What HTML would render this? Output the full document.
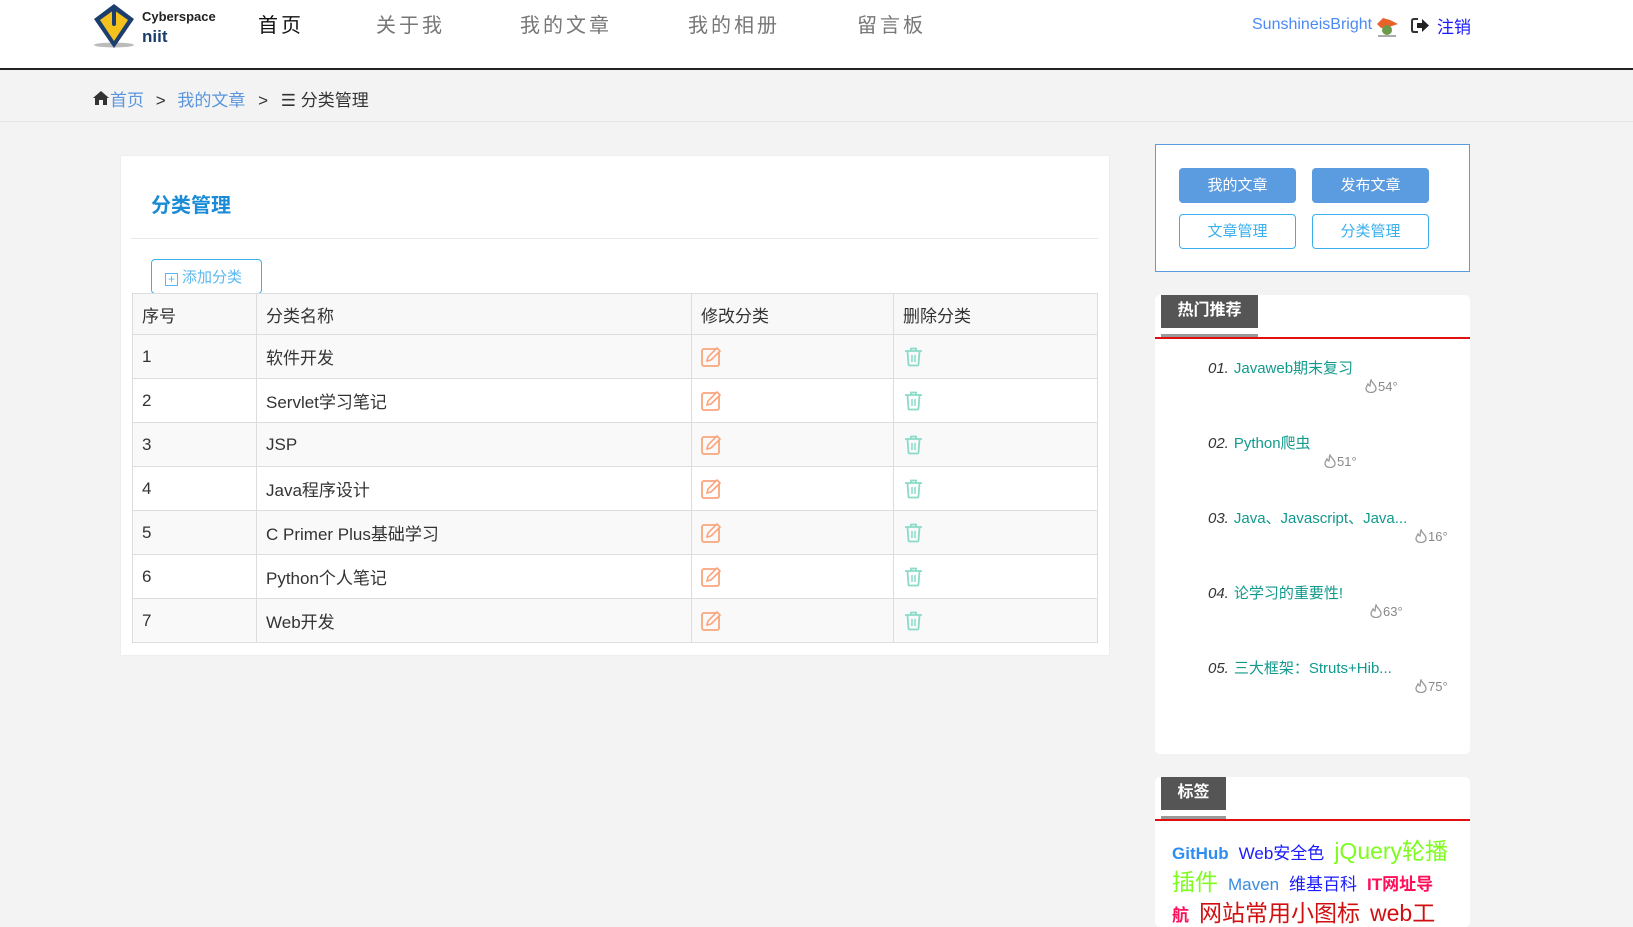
<!DOCTYPE html>
<html><head><meta charset="utf-8"><style>
*{margin:0;padding:0;box-sizing:border-box}
body{width:1633px;height:911px;overflow:hidden;background:#f3f3f3;font-family:"Liberation Sans","Noto Sans CJK SC",sans-serif;position:relative;color:#333}
.abs{position:absolute;white-space:nowrap}
#hdr{position:absolute;left:0;top:0;width:1633px;height:70px;background:#fff;border-bottom:2px solid #222}
.nav{position:absolute;top:9px;font-size:20px;letter-spacing:3px;color:#777}
#bc{position:absolute;left:0;top:70px;width:1633px;height:52px;border-bottom:1px solid #e5e5e5}
#main{position:absolute;left:120px;top:155px;width:990px;height:501px;background:#fff;border:1px solid #eee}
table{position:absolute;left:132px;top:293px;border-collapse:collapse;font-size:17px;color:#333}
td{border:1px solid #ddd;height:44px;padding-left:9px;vertical-align:middle}
tr:nth-child(even) td{background:#f9f9f9}
tr:first-child td{background:#f8f8f8;height:41px}
.btn{position:absolute;width:117px;height:35px;border-radius:4px;font-size:15px;text-align:center;line-height:35px}
.fill{background:#5b9bdf;color:#fff}
.out{border:1px solid #3ab0ee;color:#3ab0ee;line-height:33px}
.card{position:absolute;left:1155px;width:315px;background:#fff;border-radius:5px;overflow:hidden}
.tab{position:absolute;left:6px;top:0;height:34px;background:#555;color:#fff;font-weight:bold;font-size:16px;text-align:center;line-height:34px}
.hot{position:absolute;left:53px;font-size:15px;color:#119a8c}
.hot i{color:#333;font-style:italic;margin-right:5px}
.heat{position:absolute;font-size:13px;color:#888}
.heat svg{vertical-align:-2px;margin-right:1px}
.tl{position:absolute;left:17px;white-space:nowrap;font-size:18px}
.tl span,.tl b{margin-right:10px}
</style></head><body>
<div id="hdr">
 <svg class="abs" style="left:93px;top:3px" width="46" height="46" viewBox="0 0 46 46">
  <ellipse cx="21" cy="42" rx="20" ry="2.5" fill="#bbb"/>
  <path d="M21 1 L41 16 L21 45 L1 16 Z" fill="#1c3e6e"/>
  <path d="M21 7 L35 17 L21 38 L7 17 Z" fill="#f5c11c"/>
  <rect x="19" y="5" width="4" height="18" rx="2" fill="#1c3e6e"/>
 </svg>
 <div class="abs" style="left:142px;top:9px;font-size:13px;font-weight:bold;color:#222">Cyberspace</div>
 <div class="abs" style="left:142px;top:27px;font-size:17px;font-weight:bold;color:#1c3e6e">niit</div>
 <div class="nav" style="left:258px;color:#111">首页</div>
 <div class="nav" style="left:376px">关于我</div>
 <div class="nav" style="left:520px">我的文章</div>
 <div class="nav" style="left:688px">我的相册</div>
 <div class="nav" style="left:857px">留言板</div>
 <div class="abs" style="left:1252px;top:16px;font-size:16px;color:#4a8af4">SunshineisBright</div>
 <svg class="abs" style="left:1374px;top:16px" width="27" height="22" viewBox="0 0 27 22"><path d="M3 8 L9 2 L16 4 L24 8 L15 11 L7 12Z" fill="#e8622a"/><circle cx="13" cy="14" r="5" fill="#6a9a4a"/><path d="M4 20 L22 20" stroke="#aaa" stroke-width="2"/></svg>
 <svg class="abs" style="left:1411px;top:17px" width="19" height="17" viewBox="0 0 19 17"><path d="M7 2 H3 Q1 2 1 4 V13 Q1 15 3 15 H7" stroke="#333" stroke-width="2" fill="none"/><path d="M6 6 H11 V2 L18 8.5 L11 15 V11 H6Z" fill="#222"/></svg>
 <div class="abs" style="left:1437px;top:13px;font-size:17px;color:#1a1aff">注销</div>
</div>
<div id="bc">
 <svg class="abs" style="left:93px;top:21px" width="16" height="14" viewBox="0 0 16 14"><path d="M8 0 L16 7 H14 V14 H10 V9 H6 V14 H2 V7 H0Z" fill="#333"/></svg>
 <div class="abs" style="left:110px;top:16px;font-size:17px;color:#5a95dd">首页 <span style="color:#333;margin:0 7px">&gt;</span> 我的文章 <span style="color:#333;margin:0 8px">&gt;</span> <span style="color:#333">☰ 分类管理</span></div>
</div>
<div id="main"></div>
<div class="abs" style="left:151px;top:189px;font-size:20px;font-weight:bold;color:#1a8bd6">分类管理</div>
<div class="abs" style="left:131px;top:238px;width:967px;height:1px;background:#e8e8e8"></div>
<div class="abs" style="left:151px;top:259px;width:111px;height:35px;border:1px solid #3ab0ee;border-radius:4px;font-size:15px;color:#5ab8ef;line-height:35px;padding-left:13px"><span style="display:inline-block;width:13px;height:13px;border:1px solid #5ab8ef;font-size:12px;line-height:10px;text-align:center;vertical-align:-1px;margin-right:4px">+</span>添加分类</div>
<table>
<tr><td style="width:124px">序号</td><td style="width:435px">分类名称</td><td style="width:202px">修改分类</td><td style="width:204px">删除分类</td></tr>
<tr><td>1</td><td>软件开发</td><td>E</td><td>D</td></tr>
<tr><td>2</td><td>Servlet学习笔记</td><td>E</td><td>D</td></tr>
<tr><td>3</td><td>JSP</td><td>E</td><td>D</td></tr>
<tr><td>4</td><td>Java程序设计</td><td>E</td><td>D</td></tr>
<tr><td>5</td><td>C Primer Plus基础学习</td><td>E</td><td>D</td></tr>
<tr><td>6</td><td>Python个人笔记</td><td>E</td><td>D</td></tr>
<tr><td>7</td><td>Web开发</td><td>E</td><td>D</td></tr>
</table>
<script>
var e='<svg width="21" height="21" viewBox="0 0 21 21"><rect x="1" y="3" width="17" height="17" rx="2" fill="none" stroke="#f9a57c" stroke-width="1.8"/><path d="M6 15 L7 11 L16 2 L19 5 L10 14 Z" fill="#fff" stroke="#f9a57c" stroke-width="1.6"/></svg>';
var d='<svg width="21" height="21" viewBox="0 0 21 21"><path d="M2 5 H19 M8 5 V2.5 H13 V5" stroke="#8adbc8" stroke-width="1.8" fill="none"/><path d="M4.5 5.5 L5.5 18.5 Q5.6 19.5 6.6 19.5 H14.4 Q15.4 19.5 15.5 18.5 L16.5 5.5" fill="none" stroke="#8adbc8" stroke-width="1.8"/><path d="M9 9 V16 M12 9 V16" stroke="#8adbc8" stroke-width="1.5"/></svg>';
document.querySelectorAll('td').forEach(function(t){if(t.textContent=='E'){t.innerHTML=e;t.style.paddingTop='5px'}else if(t.textContent=='D'){t.innerHTML=d;t.style.paddingTop='5px'}});
var f='<svg width="12" height="14" viewBox="0 0 12 14"><path d="M6 1 C7 4 11 6 11 9.5 C11 12 8.8 13.5 6 13.5 C3.2 13.5 1 12 1 9.5 C1 7.5 2.5 6.5 3 5 C4 6.5 4.5 7 5 7 C5.5 5 5 3 6 1Z" fill="none" stroke="#999" stroke-width="1.3"/></svg>';
window.addEventListener('DOMContentLoaded',function(){document.querySelectorAll('.heat').forEach(function(h){h.innerHTML=f+h.textContent})});
</script>
<div class="abs" style="left:1155px;top:144px;width:315px;height:128px;background:#fff;border:1px solid #5b9bdf"></div>
<div class="btn fill" style="left:1179px;top:168px">我的文章</div>
<div class="btn fill" style="left:1312px;top:168px">发布文章</div>
<div class="btn out" style="left:1179px;top:214px">文章管理</div>
<div class="btn out" style="left:1312px;top:214px">分类管理</div>

<div class="card" style="top:295px;height:459px">
 <div class="tab" style="width:97px;top:-1px">热门推荐</div>
 <div class="abs" style="left:6px;top:39px;width:97px;height:3px;background:#999"></div>
 <div class="abs" style="left:0;top:42px;width:315px;height:2px;background:#e01010"></div>
 <div class="hot" style="top:62px"><i>01.</i>Javaweb期末复习</div><div class="heat" style="left:210px;top:84px">54°</div>
 <div class="hot" style="top:137px"><i>02.</i>Python爬虫</div><div class="heat" style="left:169px;top:159px">51°</div>
 <div class="hot" style="top:212px"><i>03.</i>Java、Javascript、Java...</div><div class="heat" style="left:260px;top:234px">16°</div>
 <div class="hot" style="top:287px"><i>04.</i>论学习的重要性!</div><div class="heat" style="left:215px;top:309px">63°</div>
 <div class="hot" style="top:362px"><i>05.</i>三大框架：Struts+Hib...</div><div class="heat" style="left:260px;top:384px">75°</div>
</div>
<div class="card" style="top:777px;height:150px">
 <div class="tab" style="width:65px;top:-1px">标签</div>
 <div class="abs" style="left:6px;top:39px;width:65px;height:3px;background:#999"></div>
 <div class="abs" style="left:0;top:42px;width:315px;height:2px;background:#e01010"></div>
 <div class="tl" style="top:55px"><b style="color:#2d8df0;font-size:17px">GitHub</b><span style="color:#1a1aff;font-size:17px">Web安全色</span><span style="color:#7dfc1e;font-size:23px;margin:0">jQuery轮播</span></div>
 <div class="tl" style="top:86px"><span style="color:#7dfc1e;font-size:23px">插件</span><span style="color:#3a8ae0;font-size:17px">Maven</span><span style="color:#1a1aff;font-size:17px">维基百科</span><b style="color:#ff0f5a;font-size:17px;margin:0">IT网址导</b></div>
 <div class="tl" style="top:117px"><b style="color:#ff0f5a;font-size:17px">航</b><span style="color:#d01010;font-size:23px">网站常用小图标</span><span style="color:#d01010;font-size:23px">web工</span></div>
</div>
</body></html>
